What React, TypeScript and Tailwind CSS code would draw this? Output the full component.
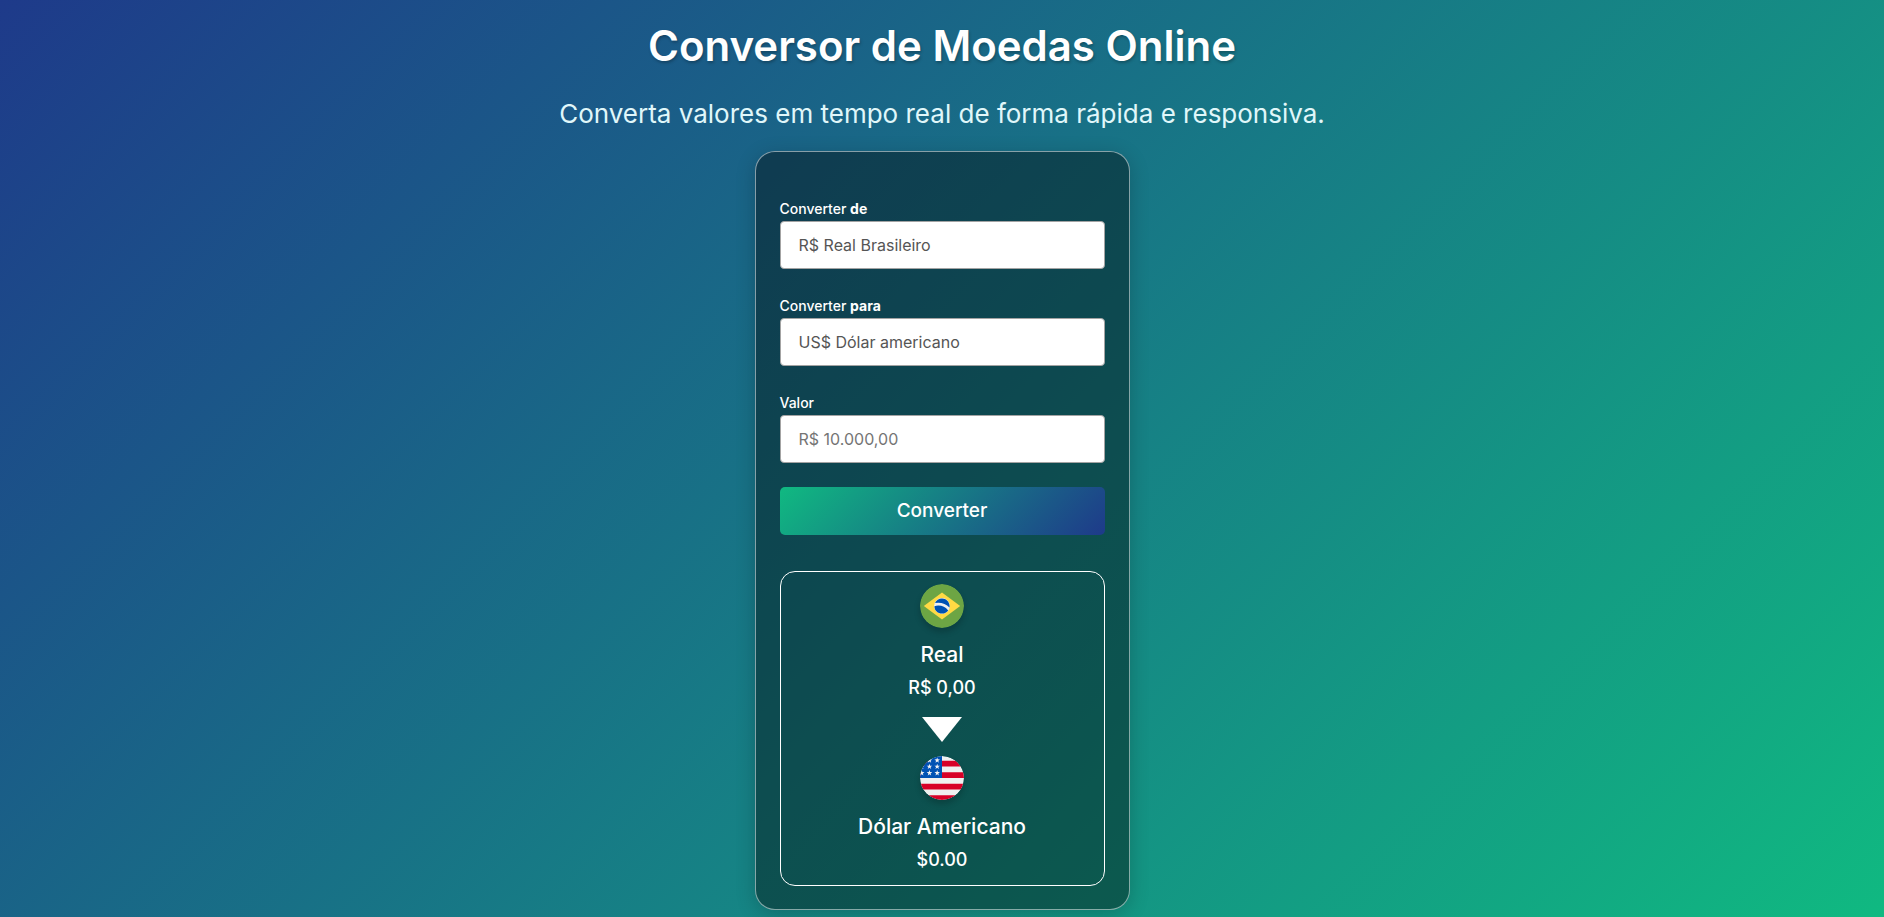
import type { ReactNode } from "react";

const STAR = "M0,-10 L2.3,-3.2 9.5,-3.1 3.8,1.3 5.9,8.1 0,4 -5.9,8.1 -3.8,1.3 -9.5,-3.1 -2.3,-3.2Z";

function BrazilFlag() {
  return (
    <svg viewBox="0 0 512 512" className="size-11 rounded-full shadow-[0_4px_6px_rgba(0,0,0,0.2)]" role="img" aria-label="Brasil">
      <circle cx="256" cy="256" r="256" fill="#6da544" />
      <path d="M256 100.200 467.500 256 256 411.800 44.500 256z" fill="#ffda44" />
      <circle cx="256" cy="256" r="92" fill="#f0f0f0" />
      <path d="M212 251c-15.300 0-30.200 2.300-44.100 6.700C168.600 305.700 207.700 344.400 256 344.400c29.900 0 56.200-14.800 72.200-37.400C300.700 272.800 258.900 251 212 251z" fill="#0052b4" />
      <path d="M343 272.300a89 89 0 0 0 1.400-16.300c0-48.800-39.600-88.400-88.400-88.400-36.600 0-68 22.300-81.400 54a191 191 0 0 1 37.400-3.700c51.300 0 97.700 20.900 131 54.400z" fill="#0052b4" />
    </svg>
  );
}

function UsaFlag() {
  const stars = [
    [110, 50], [200, 50], [20, 124], [110, 124], [200, 124], [20, 198], [110, 198], [200, 198],
  ];
  return (
    <svg viewBox="0 0 512 512" className="size-11 rounded-full shadow-[0_4px_6px_rgba(0,0,0,0.2)]" role="img" aria-label="Estados Unidos">
      <defs>
        <clipPath id="usa-disc">
          <circle cx="256" cy="256" r="256" />
        </clipPath>
      </defs>
      <g clipPath="url(#usa-disc)">
        <path d="M0 0h512v512H0z" fill="#f0f0f0" />
        <path d="M0 56h512v66H0zM0 189h512v67H0zM0 323h512v66H0zM0 456h512v56H0z" fill="#d80027" />
        <path d="M0 0h256v256H0z" fill="#0052b4" />
        {stars.map(([x, y]) => (
          <path key={`${x}-${y}`} d={STAR} transform={`translate(${x} ${y}) scale(3.400)`} fill="#f0f0f0" />
        ))}
      </g>
    </svg>
  );
}

const control =
  "block h-12 w-full appearance-none rounded-[4px] border border-[#a3a3a3] bg-white px-[18px] text-[16px] text-[#555555] outline-none placeholder:text-[#757575]";

function Field({ id, label, children }: { id: string; label: ReactNode; children: ReactNode }) {
  return (
    <div className="flex flex-col gap-0.5">
      <label htmlFor={id} className="text-[14px] leading-5 font-medium">
        {label}
      </label>
      {children}
    </div>
  );
}

function Currency({ flag, name, value }: { flag: ReactNode; name: string; value: string }) {
  return (
    <div className="flex flex-col items-center">
      {flag}
      <p className="mt-3 text-[21px] leading-[30px] font-medium">{name}</p>
      <p className="mt-1 text-[18px] leading-7 font-medium">{value}</p>
    </div>
  );
}

export default function App() {
  return (
    <div className="flex min-h-screen flex-col items-center bg-[linear-gradient(135deg,#1e3a8a,#10b981)] px-4 pb-2 font-[Inter,sans-serif] text-white">
      <header className="flex flex-col items-center text-center">
        <h1 className="mt-4 text-[42px] leading-[60px] font-semibold [text-shadow:1px_2px_3px_rgba(0,0,0,0.25)]">
          Conversor de Moedas Online
        </h1>
        <p className="mt-5 text-[26px] leading-9 text-[#e0f7fa]">
          Converta valores em tempo real de forma rápida e responsiva.
        </p>
      </header>

      <main className="mt-[19px] w-full max-w-[375px] rounded-[20px] border border-white/50 bg-black/40 px-6 pt-[47px] pb-[23px] shadow-[0_4px_20px_rgba(0,0,0,0.2)]">
        <form className="flex flex-col" onSubmit={(e) => e.preventDefault()}>
          <div className="flex flex-col gap-[27px]">
            <Field id="from" label={<>Converter <strong className="font-bold">de</strong></>}>
              <select id="from" className={control} defaultValue="brl">
                <option value="brl">R$ Real Brasileiro</option>
              </select>
            </Field>
            <Field id="to" label={<>Converter <strong className="font-bold">para</strong></>}>
              <select id="to" className={control} defaultValue="usd">
                <option value="usd">US$ Dólar americano</option>
              </select>
            </Field>
            <Field id="amount" label="Valor">
              <input id="amount" className={control} placeholder="R$ 10.000,00" />
            </Field>
          </div>
          <button
            type="submit"
            className="mt-6 h-12 w-full rounded-[5px] bg-[linear-gradient(135deg,#10b981,#1e3a8a)] text-[19px] font-medium"
          >
            Converter
          </button>
        </form>

        <section className="mt-9 flex flex-col items-center rounded-[15px] border border-white pt-3 pb-[11px]">
          <Currency flag={<BrazilFlag />} name="Real" value="R$ 0,00" />
          <svg viewBox="0 0 40 25" className="mt-[15px] mb-3.5 h-[25px] w-10" aria-hidden="true">
            <path d="M0 0h40L20 25z" fill="#fff" />
          </svg>
          <Currency flag={<UsaFlag />} name="Dólar Americano" value="$0.00" />
        </section>
      </main>
    </div>
  );
}
